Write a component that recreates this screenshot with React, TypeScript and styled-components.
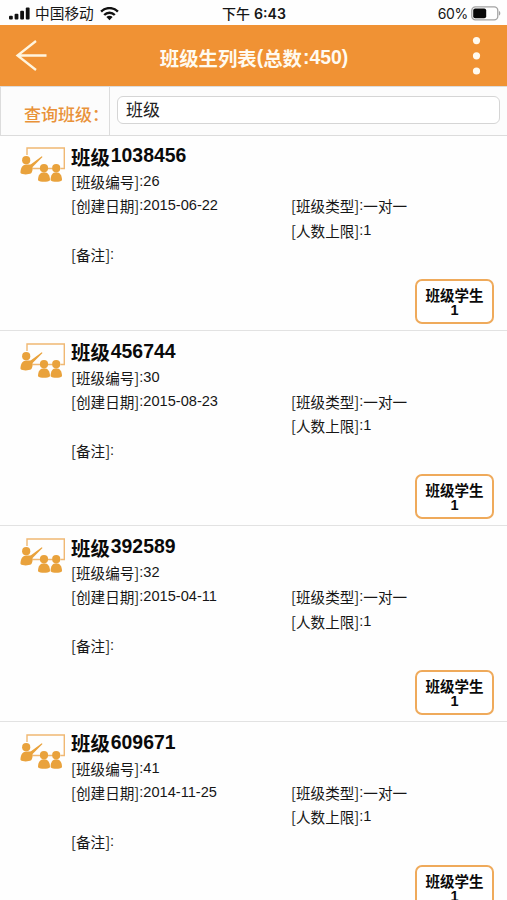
import React from "react";
import styled, { createGlobalStyle } from "styled-components";

const GlobalStyle = createGlobalStyle`
  * { box-sizing: border-box; }
  body {
    margin: 0;
    background: #fefefe;
    font-family: "Liberation Sans", "Noto Sans CJK SC", sans-serif;
    color: #161616;
  }
`;

const Screen = styled.div`
  width: 507px;
  height: 900px;
  overflow: hidden;
  display: flex;
  flex-direction: column;
`;

const Han = styled.span<{ $drop?: number; $gap?: number }>`
  font-family: "Noto Sans CJK SC", sans-serif;
  line-height: 0;
  vertical-align: ${(p) => -(p.$drop ?? 0)}px;
  margin-right: ${(p) => p.$gap ?? 0}px;
`;

const StatusBar = styled.header`
  flex: none;
  height: 25px;
  display: grid;
  grid-template-columns: 1fr auto 1fr;
  align-items: center;
  padding: 2px 6px 0 9px;
  font-family: Inter, "Noto Sans CJK SC", sans-serif;
  font-size: 13.5px;
  line-height: 20px;
`;

const StatusGroup = styled.div<{ $end?: boolean }>`
  display: flex;
  align-items: center;
  justify-content: ${(p) => (p.$end ? "flex-end" : "flex-start")};
`;

const Carrier = styled.span`
  margin: 0 6px 0 4px;
  font-size: 14.7px;
`;

const Clock = styled.div`
  font-size: 14.1px;
  font-weight: 600;
  padding-right: 2px;
`;

const ClockPrefix = styled.span`
  font-weight: 500;
  font-size: 14px;
  margin-right: 4px;
`;

const Percent = styled.span`
  margin-right: 3px;
  font-size: 14px;
  letter-spacing: -0.3px;
`;

const NavBar = styled.nav`
  flex: none;
  height: 61px;
  display: grid;
  grid-template-columns: 60px 1fr 60px;
  align-items: center;
  background: #f09234;
  color: #fffaf0;
`;

const NavButton = styled.button`
  height: 61px;
  padding: 0;
  border: 0;
  background: none;
  display: block;
`;

const NavTitle = styled.h1`
  margin: 0;
  padding: 2px 0 0 1px;
  text-align: center;
  font-size: 19.4px;
  line-height: 24px;
  font-weight: 700;
  white-space: nowrap;
`;

const SearchRow = styled.div`
  flex: none;
  height: 50px;
  display: flex;
  border: solid #dcdcdc;
  border-width: 1px 0 1px 1px;
  background: #fcfcfc;
`;

const SearchLabel = styled.label`
  width: 109px;
  padding: 5px 0 0 23px;
  border-right: 1px solid #dcdcdc;
  color: #e99239;
  font: 500 17px/44px "Noto Sans CJK SC", sans-serif;
  white-space: nowrap;
`;

const SearchInput = styled.input`
  flex: 1;
  height: 28px;
  margin: 9px 7px 0 7px;
  padding: 0 8px 3px;
  border: 1.5px solid #d5d5d5;
  border-radius: 6px;
  background: #fff;
  color: #222;
  font: 400 17px/22px "Noto Sans CJK SC", sans-serif;
  outline: none;
`;

const ClassList = styled.main`
  flex: none;
  display: flex;
  flex-direction: column;
  margin-top: -1px;
`;

const ClassCard = styled.article`
  flex: none;
  height: 195.5px;
  display: grid;
  grid-template-columns: 51px 1fr;
  padding: 7px 12px 0 20px;
  border-bottom: 1px solid #e2e2e2;
`;

const CardBody = styled.div`
  display: flex;
  flex-direction: column;
`;

const CardTitle = styled.h2`
  margin: 0;
  height: 27px;
  font-size: 19.4px;
  line-height: 27px;
  font-weight: 700;
  color: #0a0a0a;
`;

const Fields = styled.div`
  display: grid;
  grid-template-columns: 220px 1fr;
  grid-auto-rows: 24.4px;
`;

const FieldLine = styled.div<{ $column: number; $row: number }>`
  grid-column: ${(p) => p.$column};
  grid-row: ${(p) => p.$row};
  font-size: 14.6px;
  line-height: 24.4px;
  white-space: nowrap;
`;

const StudentsButton = styled.button`
  align-self: flex-end;
  width: 79px;
  height: 45px;
  margin: 12px 1px 0 0;
  padding: 3px 0 0;
  border: 2px solid #efaa5b;
  border-radius: 7px;
  background: #fff;
  color: #0a0a0a;
  font: 700 14.5px/15px "Liberation Sans", sans-serif;
`;

const ButtonLine = styled.span`
  display: block;
`;

const Icon = styled.svg`
  display: block;
  flex: none;
`;

function SignalIcon() {
  return (
    <Icon width="22" height="14" viewBox="0 0 22 14" fill="#111">
      <rect x="0" y="8.7" width="3.8" height="3.8" rx="1" />
      <rect x="5.6" y="6.7" width="3.8" height="5.8" rx="1" />
      <rect x="11.2" y="3.7" width="3.8" height="8.8" rx="1" />
      <rect x="16.8" y="0.5" width="3.8" height="12" rx="1" />
    </Icon>
  );
}

function WifiIcon() {
  return (
    <Icon width="19" height="14" viewBox="0 0 18 14" fill="none" stroke="#111" strokeWidth="2.4">
      <path d="M0.6 4.6a11.8 11.8 0 0 1 16.8 0" />
      <path d="M3.7 8a7.4 7.4 0 0 1 10.6 0" />
      <path d="M9 13.2L5.9 10a4.4 4.4 0 0 1 6.2 0Z" fill="#111" stroke="none" />
    </Icon>
  );
}

function BatteryIcon() {
  return (
    <Icon width="30" height="15" viewBox="0 0 30 15">
      <rect x="0.8" y="0.8" width="26" height="13" rx="3.6" fill="none" stroke="#a2a2a2" strokeWidth="1.3" />
      <rect x="2.2" y="2.4" width="13" height="9.8" rx="2" fill="#080808" />
      <path d="M28 5v4.6c1.8-.7 1.8-3.9 0-4.6Z" fill="#a2a2a2" />
    </Icon>
  );
}

function BackIcon() {
  return (
    <Icon width="60" height="61" viewBox="0 0 60 61" fill="none" stroke="#fff5df" strokeWidth="2.3">
      <path d="M46.5 30.5H18M36 16L17.5 30.5L36 45" />
    </Icon>
  );
}

function MoreIcon() {
  return (
    <Icon width="60" height="61" viewBox="0 0 60 61" fill="#fffaf0">
      <circle cx="29.5" cy="15.6" r="3.6" />
      <circle cx="29.5" cy="30.8" r="3.6" />
      <circle cx="29.5" cy="46" r="3.6" />
    </Icon>
  );
}

function ClassroomIcon() {
  return (
    <Icon width="46" height="42" viewBox="0 0 46 42" fill="#e9a23c">
      <path d="M7 13V6H44.3V26.5H40.5" fill="none" stroke="#f0b873" strokeWidth="1.4" />
      <path d="M12.5 26.5H20M28 26.5h4" stroke="#f0b873" strokeWidth="1.4" />
      <circle cx="6.2" cy="18.2" r="4.1" />
      <path d="M0.5 31c0-5 1.8-8.6 5.6-8.6 2 0 3.6.6 5.2-.4L21.8 14.2l.7.9L12.6 25c.3 2.6-.5 5-1.4 6.3-2.8 1.4-8.4 1.7-10.7-.3Z" />
      <circle cx="24" cy="26.2" r="4.1" />
      <path d="M18 38.2c0-5 2-8 6-8s6 3 6 8c-2 2-10 2-12 0Z" />
      <circle cx="36.2" cy="26.2" r="4.1" />
      <path d="M30.6 38.2c0-5 1.8-8 5.6-8s5.8 3 5.8 8c-2 2-9.4 2-11.4 0Z" />
    </Icon>
  );
}

interface FieldProps {
  label: string;
  column: number;
  row: number;
  children?: React.ReactNode;
}

function Field({ label, column, row, children }: FieldProps) {
  return (
    <FieldLine $column={column} $row={row}>
      <Han $drop={1.5}>[{label}]</Han>:{children}
    </FieldLine>
  );
}

const classes = [
  { name: "1038456", id: 26, created: "2015-06-22" },
  { name: "456744", id: 30, created: "2015-08-23" },
  { name: "392589", id: 32, created: "2015-04-11" },
  { name: "609671", id: 41, created: "2014-11-25" },
];

export default function App() {
  return (
    <Screen>
      <GlobalStyle />
      <StatusBar>
        <StatusGroup>
          <SignalIcon />
          <Carrier>中国移动</Carrier>
          <WifiIcon />
        </StatusGroup>
        <Clock>
          <ClockPrefix>下午</ClockPrefix>6:43
        </Clock>
        <StatusGroup $end>
          <Percent>60%</Percent>
          <BatteryIcon />
        </StatusGroup>
      </StatusBar>
      <NavBar>
        <NavButton aria-label="返回">
          <BackIcon />
        </NavButton>
        <NavTitle>
          <Han $drop={2}>班级生列表</Han>(<Han $drop={2} $gap={1}>总数</Han>:450)
        </NavTitle>
        <NavButton aria-label="更多">
          <MoreIcon />
        </NavButton>
      </NavBar>
      <SearchRow>
        <SearchLabel htmlFor="query">查询班级：</SearchLabel>
        <SearchInput id="query" defaultValue="班级" />
      </SearchRow>
      <ClassList>
        {classes.map((item) => (
          <ClassCard key={item.id}>
            <ClassroomIcon />
            <CardBody>
              <CardTitle>
                <Han $drop={2.5} $gap={1}>班级</Han>
                {item.name}
              </CardTitle>
              <Fields>
                <Field label="班级编号" column={1} row={1}>{item.id}</Field>
                <Field label="创建日期" column={1} row={2}>{item.created}</Field>
                <Field label="班级类型" column={2} row={2}>
                  <Han $drop={1.5}>一对一</Han>
                </Field>
                <Field label="人数上限" column={2} row={3}>1</Field>
                <Field label="备注" column={1} row={4} />
              </Fields>
              <StudentsButton>
                <ButtonLine>
                  <Han $drop={1}>班级学生</Han>
                </ButtonLine>
                <ButtonLine>1</ButtonLine>
              </StudentsButton>
            </CardBody>
          </ClassCard>
        ))}
      </ClassList>
    </Screen>
  );
}
